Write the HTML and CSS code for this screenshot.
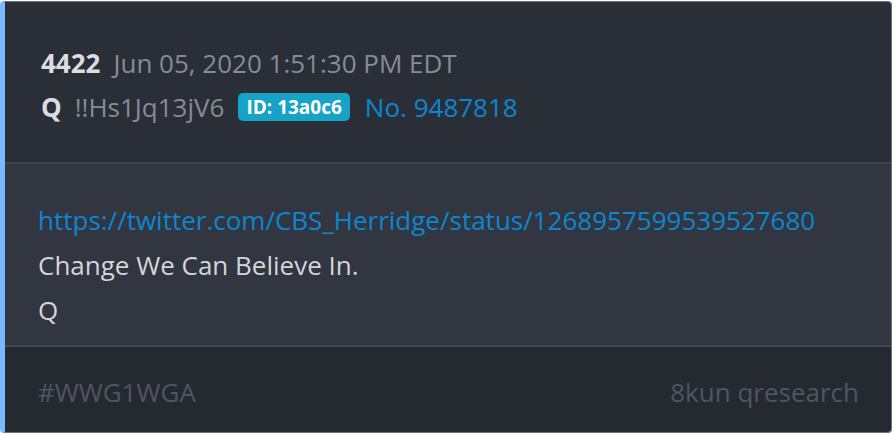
FILE: index.html
```html
<!DOCTYPE html>
<html>
<head>
<meta charset="utf-8">
<link rel="stylesheet" href="styles.css">
</head>
<body>
<div class="card">
  <div class="head">
    <div class="row">
      <span class="num">4422</span>
      <span class="muted">Jun 05, 2020 1:51:30 PM EDT</span>
    </div>
    <div class="row">
      <span class="num">Q</span>
      <span class="muted">!!Hs1Jq13jV6</span>
      <span class="badge">ID: 13a0c6</span>
      <a class="link">No. 9487818</a>
    </div>
  </div>
  <div class="body">
    <p><a class="link">https://twitter.com/CBS_Herridge/status/1268957599539527680</a></p>
    <p>Change We Can Believe In.</p>
    <p>Q</p>
  </div>
  <div class="foot">
    <span>#WWG1WGA</span>
    <span>8kun qresearch</span>
  </div>
</div>
</body>
</html>
```
FILE: styles.css
```css
* { box-sizing: border-box; }
html, body { margin: 0; padding: 0; background: #ffffff; }
body {
  font-family: "Open Sans", "Noto Sans", sans-serif;
  width: 894px;
  height: 434px;
}
.card {
  margin: 1px 2px 1px 0;
  height: 432px;
  border: 1px solid #6a7080;
  border-left: 5px solid #7ab8ff;
  border-radius: 4px;
  overflow: hidden;
  display: flex;
  flex-direction: column;
  font-size: 26px;
}
.head {
  background: #2a2e37;
  height: 162px;
  padding: 43px 36px 0;
  border-bottom: 2px solid #3d424e;
  display: flex;
  flex-direction: column;
  gap: 8px;
}
.row {
  display: flex;
  align-items: center;
  gap: 13px;
  line-height: 36px;
}
.row .badge { margin-left: 1px; margin-right: 2px; }
.num { font-weight: 700; color: #dcdde0; }
.muted { color: #868b98; }
.badge {
  background: #17a2c8;
  color: #fff;
  font-weight: 700;
  font-size: 19px;
  line-height: 24px;
  padding: 2px 8px;
  border-radius: 5px;
}
.link { color: #0d86d0; text-decoration: none; }
.body {
  background: #313641;
  height: 183px;
  padding: 34px 33px 0;
  border-bottom: 2px solid #434855;
  color: #d4d5d8;
}
.body p { margin: 0; line-height: 45px; }
.foot {
  background: #252930;
  flex: 1;
  display: flex;
  justify-content: space-between;
  align-items: center;
  padding: 4px 32px 0 33px;
  color: #4f5563;
}
```
